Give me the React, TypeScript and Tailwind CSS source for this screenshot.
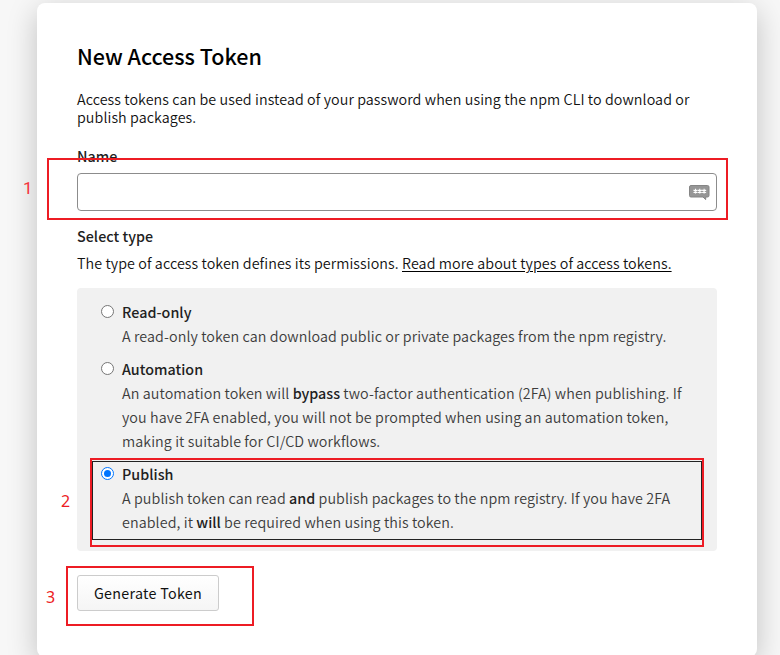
import React from "react";

type OptionProps = {
  title: string;
  checked?: boolean;
  className?: string;
  lines: React.ReactNode[];
};

function Option({ title, checked = false, className = "", lines }: OptionProps) {
  return (
    <label className={`flex ${className}`}>
      <span
        className={`mt-[5px] flex size-[13px] shrink-0 items-center justify-center rounded-full border bg-white ${
          checked ? "border-[#0075ff]" : "border-[#767676]"
        }`}
      >
        {checked && <span className="size-[7.5px] rounded-full bg-[#0075ff]" />}
      </span>
      <span className="ml-2 flex flex-col text-[#3c3c3c]">
        <span className="h-6 whitespace-nowrap font-medium leading-6 tracking-[0.03px] text-[#212121]">{title}</span>
        {lines.map((line, i) => (
          <span key={i} className="h-6 whitespace-nowrap font-[350] leading-6 tracking-[0.09px]">
            {line}
          </span>
        ))}
      </span>
    </label>
  );
}

function Strong({ children }: { children: React.ReactNode }) {
  return <b className="font-medium tracking-normal text-[#212121]">{children}</b>;
}

function PasswordBubble() {
  return (
    <svg width="21" height="16" viewBox="0 0 21 16" fill="none" className="mt-[2px]">
      <path d="M2 .5h16.500q1.500 0 1.500 1.500v8.500q0 1.500-1.500 1.500h-1.800v2.600l-2.700-2.600H2q-1.500 0-1.500-1.500V2Q.5.5 2 .5z" fill="#969696" stroke="#858585" />
      <g stroke="#fff" strokeWidth="1.2">
        <path d="M6.500 3.800v4.600M4.500 5l4 2.400M8.500 5l-4 2.400" />
        <path d="M10.800 3.800v4.600M8.800 5l4 2.400M12.800 5l-4 2.400" />
        <path d="M15.100 3.800v4.600M13.100 5l4 2.400M17.100 5l-4 2.400" />
      </g>
    </svg>
  );
}

export default function App() {
  return (
    <div className="relative h-[655px] w-[780px] overflow-hidden bg-[#f7f7f7] pl-[37px] pt-[3px] font-['Noto_Sans_CJK_SC','Noto_Sans',sans-serif] text-[14.3px] text-black">
      <main className="h-[654px] w-[720px] rounded-lg bg-white px-10 pt-[37px] shadow-[0_8px_30px_rgba(0,0,0,0.22)]">
        <h1 className="h-8 whitespace-nowrap text-[21.5px] font-medium leading-8">New Access Token</h1>
        <p className="mt-[18px] whitespace-nowrap font-[350] leading-[18px] tracking-[0.08px] text-[#111111]">
          Access tokens can be used instead of your password when using the npm CLI to download or
          <br />
          publish packages.
        </p>
        <div className="mt-[21px] h-[18px] font-medium leading-[18px] text-[#212121]">Name</div>
        <div className="mt-[8px] flex h-[38px] items-center justify-end rounded border border-[#8c8c8c] bg-white pr-[6px]">
          <PasswordBubble />
        </div>
        <div className="mt-[15px] h-5 font-medium leading-5 tracking-[0.03px] text-[#212121]">Select type</div>
        <p className="mt-[7px] h-5 whitespace-nowrap font-[350] leading-5 tracking-[0.08px] text-[#111111]">
          The type of access token defines its permissions.{" "}
          <a className="underline decoration-black underline-offset-2">Read more about types of access tokens.</a>
        </p>
        <div className="mt-[15px] h-[263px] rounded bg-[#f1f1f1] pl-[15px] pt-[12px]">
          <Option
            title="Read-only"
            className="ml-[9px]"
            lines={["A read-only token can download public or private packages from the npm registry."]}
          />
          <Option
            title="Automation"
            className="ml-[9px] mt-[9px]"
            lines={[
              <>An automation token will <Strong>bypass</Strong> two-factor authentication (2FA) when publishing. If</>,
              "you have 2FA enabled, you will not be prompted when using an automation token,",
              "making it suitable for CI/CD workflows.",
            ]}
          />
          <Option
            title="Publish"
            checked
            className="mt-[8px] h-[79px] w-[610px] border border-[#222222] pl-[8px]"
            lines={[
              <>A publish token can read <Strong>and</Strong> publish packages to the npm registry. If you have 2FA</>,
              <>enabled, it <Strong>will</Strong> be required when using this token.</>,
            ]}
          />
        </div>
        <button className="mt-6 flex h-9 w-[142px] items-center justify-center whitespace-nowrap rounded-[3px] border border-[#cccccc] bg-linear-to-b from-white to-[#f5f5f5] text-[14.3px] tracking-[0.28px] text-[#111111]">
          Generate Token
        </button>
      </main>

      {/* Numbered step annotations laid over the form */}
      <div className="absolute left-[47px] top-[158px] h-[62px] w-[681px] border-2 border-[#ed1c24]" />
      <div className="absolute left-[90px] top-[458px] h-[89px] w-[614px] border-2 border-[#ed1c24]" />
      <div className="absolute left-[66px] top-[566px] h-[60px] w-[188px] border-2 border-[#ed1c24]" />
      <span className="absolute left-[23px] top-[178px] font-['Roboto',sans-serif] text-[17px] leading-5 text-[#f5333a]">1</span>
      <span className="absolute left-[61px] top-[491px] font-['Noto_Sans',sans-serif] text-base leading-5 text-[#ed1c24]">2</span>
      <span className="absolute left-[46px] top-[587px] font-['Noto_Sans',sans-serif] text-base leading-5 text-[#ed1c24]">3</span>
    </div>
  );
}
